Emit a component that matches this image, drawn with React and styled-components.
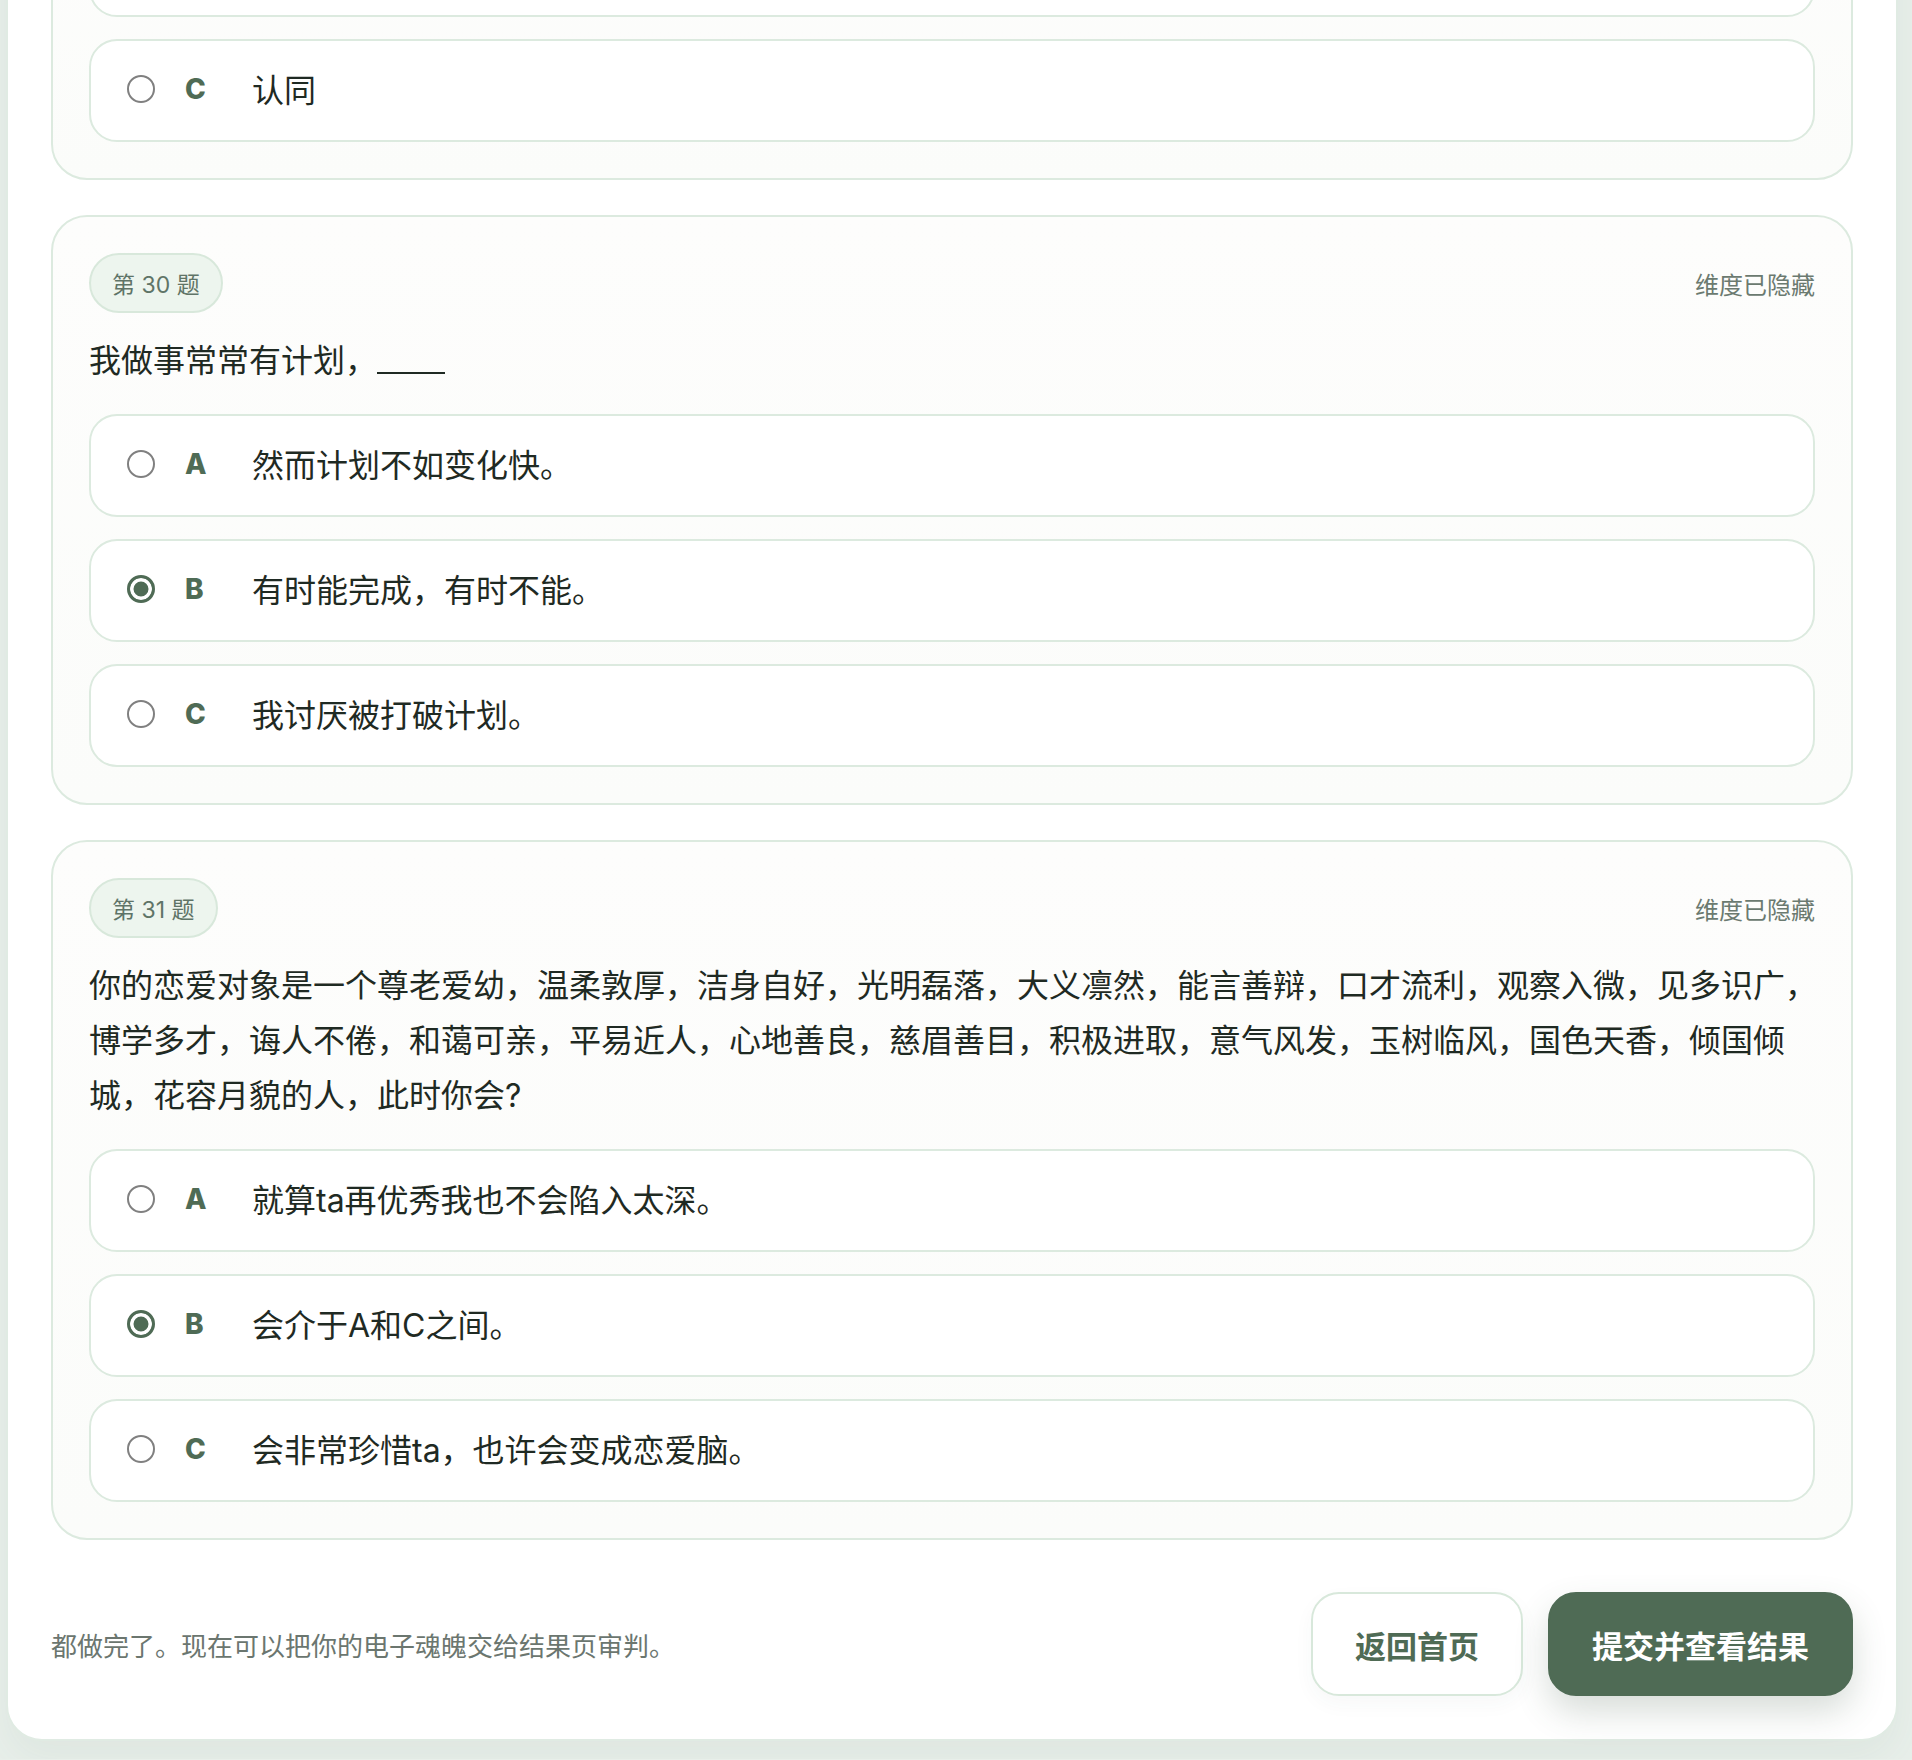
import React from "react";
import styled, { createGlobalStyle } from "styled-components";

const GlobalStyle = createGlobalStyle`
  html, body {
    margin: 0;
    padding: 0;
    background: #e8efea;
  }
  body {
    font-family: Inter, "Noto Sans CJK SC", sans-serif;
    color: #1f2a23;
  }
  * { box-sizing: border-box; }
`;

const Page = styled.div`
  padding: 0 14px 18px 6px;
`;

// the page is scrolled: the panel starts above the window
const Panel = styled.main`
  margin-top: -169px;
  background: #ffffff;
  border: 2px solid #e0ebe3;
  border-radius: 36px;
  padding: 43px;
  box-shadow: 0 18px 40px rgba(70, 95, 78, 0.06);
`;

const Questions = styled.div`
  display: flex;
  flex-direction: column;
  gap: 35px;
`;

const Card = styled.section`
  background: linear-gradient(180deg, #fdfdfc 0%, #fbfcfa 100%);
  border: 2px solid #dceadf;
  border-radius: 36px;
  padding: 36px;
`;

const Header = styled.div`
  display: flex;
  justify-content: space-between;
  align-items: center;
  margin-bottom: 20px;
`;

const Badge = styled.span`
  display: inline-flex;
  align-items: center;
  height: 60px;
  padding: 0 21px;
  border-radius: 999px;
  background: #edf5ee;
  border: 2px solid #d8e8db;
  color: #5f7467;
  font-size: 23px;
  white-space: pre;
`;

const Hint = styled.span`
  font-size: 24px;
  color: #6b7a70;
`;

const Prompt = styled.p`
  margin: 0 -6px 0 0;
  font-size: 32px;
  line-height: 55px;
  color: #1f2a23;
`;

const Blank = styled.span`
  display: inline-block;
  width: 68px;
  height: 32px;
  border-bottom: 2px solid #1f2a23;
  vertical-align: -2px;
`;

const Options = styled.div`
  display: flex;
  flex-direction: column;
  gap: 22px;
  margin-top: ${(p) => (p.$flush ? "0" : "26px")};
`;

const Option = styled.label`
  display: flex;
  align-items: center;
  min-height: 103px;
  background: #ffffff;
  border: 2px solid #dceadf;
  border-radius: 28px;
  padding: 22px 36px;
  cursor: pointer;
`;

const Radio = styled.span`
  flex: none;
  width: 28px;
  height: 28px;
  border-radius: 50%;
  margin-top: -4px;
  border: ${(p) => (p.$checked ? "3px solid #4f6b55" : "2px solid #808080")};
  background: ${(p) => (p.$checked ? "#4f6b55" : "#ffffff")};
  box-shadow: ${(p) => (p.$checked ? "inset 0 0 0 3.5px #ffffff" : "none")};
`;

const Letter = styled.span`
  flex: none;
  width: 36px;
  margin-left: 30px;
  margin-top: -4px;
  font-family: Inter, "Liberation Sans", Arial, sans-serif;
  font-weight: 800;
  font-size: 28px;
  color: #4f6b55;
`;

const OptionText = styled.span`
  margin-left: 31px;
  font-size: 32px;
  line-height: 55px;
  color: #1f2a23;
`;

const Footer = styled.footer`
  display: flex;
  align-items: center;
  justify-content: space-between;
  margin-top: 52px;
`;

const FooterNote = styled.p`
  margin: 0;
  font-size: 26px;
  color: #6b766f;
`;

const Actions = styled.div`
  display: flex;
  gap: 25px;
`;

const Button = styled.button`
  height: 104px;
  padding: 0 42px;
  border-radius: 28px;
  font-family: Inter, "Noto Sans CJK SC", sans-serif;
  font-size: 31px;
  font-weight: 700;
  cursor: pointer;
  border: 2px solid ${(p) => (p.$primary ? "#4f6b55" : "#d8e8db")};
  background: ${(p) => (p.$primary ? "#4f6b55" : "#ffffff")};
  color: ${(p) => (p.$primary ? "#ffffff" : "#4f6b55")};
  box-shadow: ${(p) =>
    p.$primary ? "0 16px 34px rgba(60, 85, 66, 0.2)" : "0 8px 20px rgba(60, 85, 66, 0.04)"};
`;

const letters = ["A", "B", "C"];

// tail of the previous question, scrolled mostly out of view
const previous = { options: [null, "认同"], picked: -1, offset: 1 };

const questions = [
  {
    no: 30,
    text: "我做事常常有计划，",
    blank: true,
    options: ["然而计划不如变化快。", "有时能完成，有时不能。", "我讨厌被打破计划。"],
    picked: 1,
  },
  {
    no: 31,
    text:
      "你的恋爱对象是一个尊老爱幼，温柔敦厚，洁身自好，光明磊落，大义凛然，能言善辩，口才流利，观察入微，见多识广，博学多才，诲人不倦，和蔼可亲，平易近人，心地善良，慈眉善目，积极进取，意气风发，玉树临风，国色天香，倾国倾城，花容月貌的人，此时你会?",
    options: ["就算ta再优秀我也不会陷入太深。", "会介于A和C之间。", "会非常珍惜ta，也许会变成恋爱脑。"],
    picked: 1,
  },
];

function OptionList({ q, flush }) {
  const offset = q.offset || 0;
  return (
    <Options $flush={flush}>
      {q.options.map((opt, i) =>
        opt === null ? (
          <Option key={i} aria-hidden="true" />
        ) : (
          <Option key={i}>
            <Radio $checked={q.picked === i} />
            <Letter>{letters[i + offset]}</Letter>
            <OptionText>{opt}</OptionText>
          </Option>
        )
      )}
    </Options>
  );
}

function QuestionCard({ q }) {
  return (
    <Card>
      <Header>
        <Badge>{`第 ${q.no} 题`}</Badge>
        <Hint>维度已隐藏</Hint>
      </Header>
      <Prompt>
        {q.text}
        {q.blank && <Blank />}
      </Prompt>
      <OptionList q={q} />
    </Card>
  );
}

export default function App() {
  return (
    <>
      <GlobalStyle />
      <Page>
        <Panel>
          <Questions>
            <Card>
              <OptionList q={previous} flush />
            </Card>
            {questions.map((q) => (
              <QuestionCard key={q.no} q={q} />
            ))}
          </Questions>
          <Footer>
            <FooterNote>都做完了。现在可以把你的电子魂魄交给结果页审判。</FooterNote>
            <Actions>
              <Button>返回首页</Button>
              <Button $primary>提交并查看结果</Button>
            </Actions>
          </Footer>
        </Panel>
      </Page>
    </>
  );
}
